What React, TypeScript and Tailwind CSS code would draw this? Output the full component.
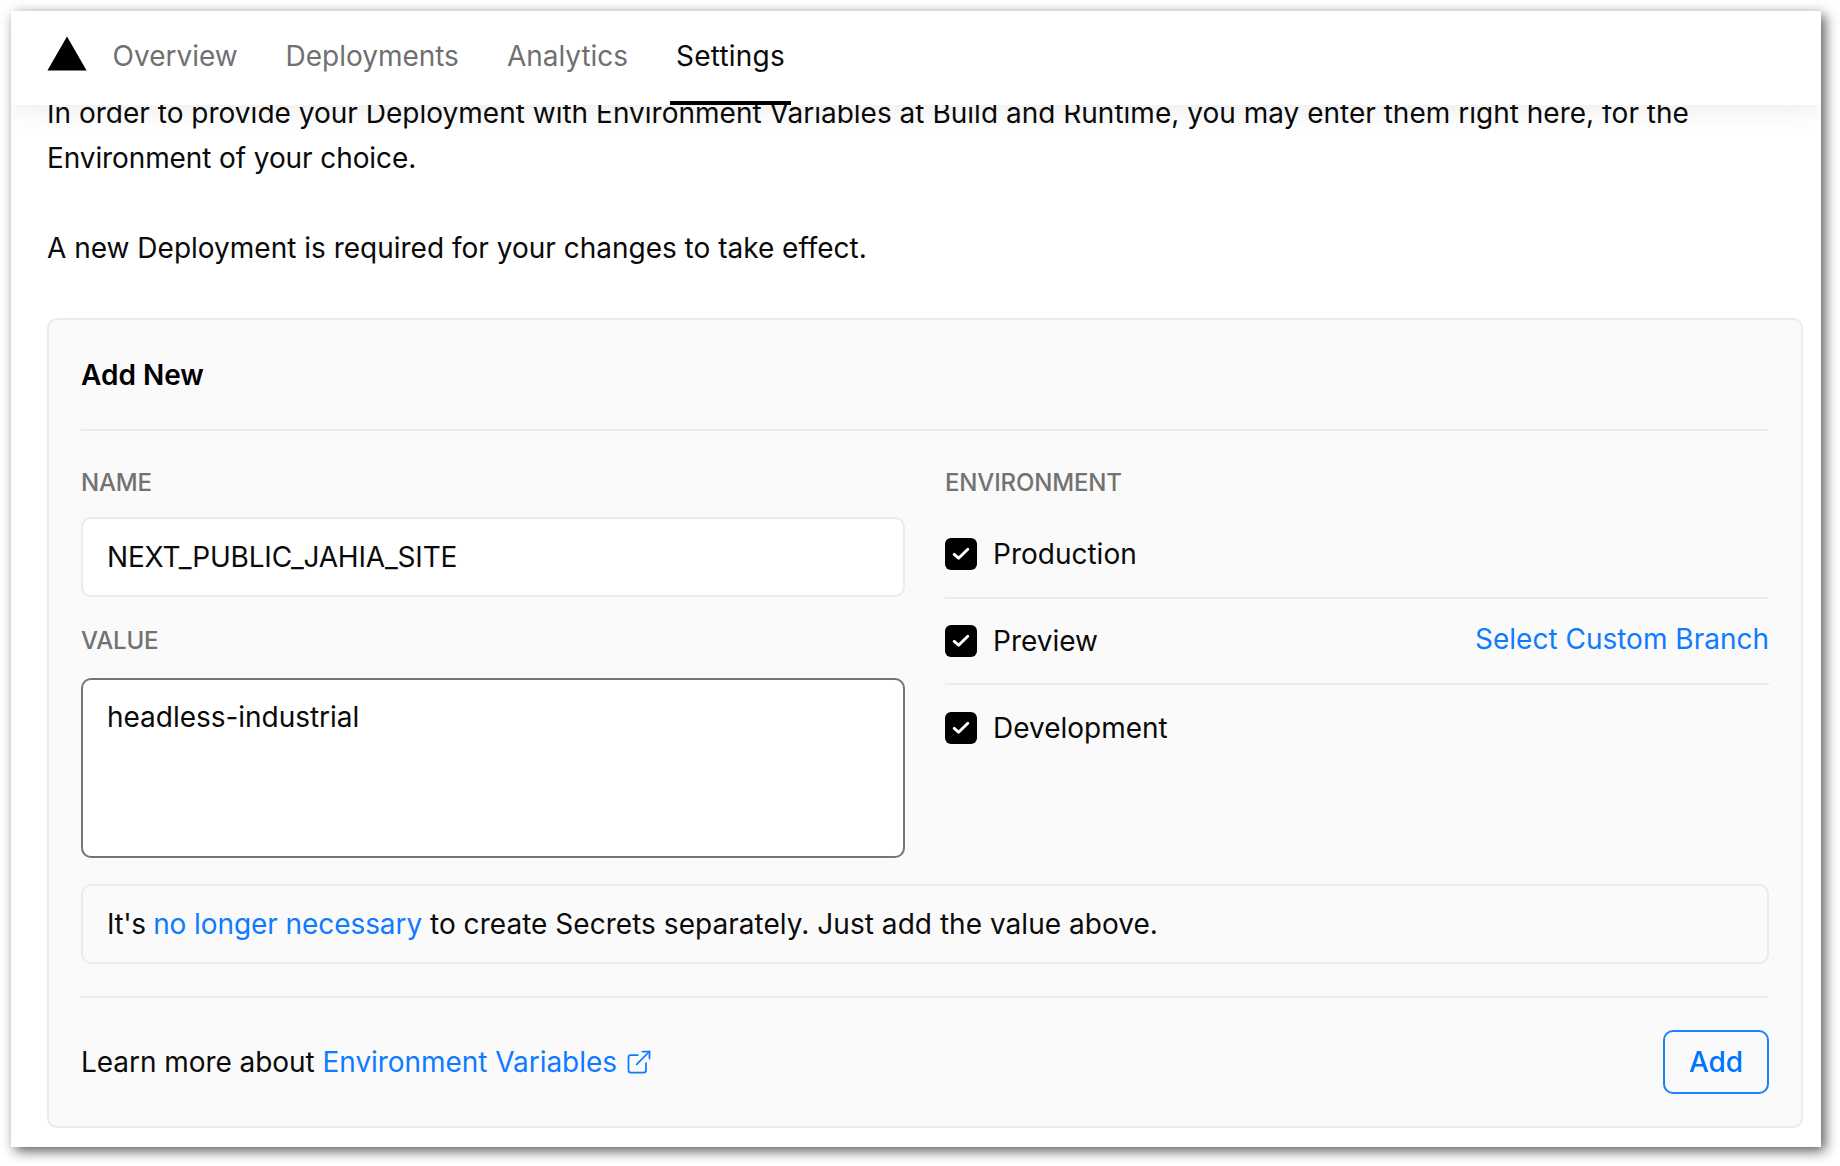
import React from "react";

const tabs = [
  { label: "Overview", active: false },
  { label: "Deployments", active: false },
  { label: "Analytics", active: false },
  { label: "Settings", active: true },
];

function Tab({ label, active }: { label: string; active: boolean }) {
  return (
    <a
      className={
        active
          ? "relative flex h-full items-center px-1.5 pb-1 tracking-[0.2px] text-[#0a0a0a]"
          : "relative flex h-full items-center px-1.5 pb-1 tracking-[-0.02px] text-[#707070]"
      }
    >
      {label}
      {active && <span className="absolute inset-x-0 bottom-0 h-1 bg-black" />}
    </a>
  );
}

function Check() {
  return (
    <span className="flex size-8 items-center justify-center rounded-[6px] bg-black">
      <svg viewBox="0 0 32 32" className="size-8" fill="none" stroke="white" strokeWidth="2.9" strokeLinecap="round" strokeLinejoin="round">
        <path d="M9.2 16.4L13.6 20.2L22.8 11.2" />
      </svg>
    </span>
  );
}

function Option({ label }: { label: string }) {
  return (
    <label className="flex h-8 items-center gap-4 leading-8">
      <Check />
      <span>{label}</span>
    </label>
  );
}

function FieldLabel({ children }: { children: React.ReactNode }) {
  return <div className="h-[38px] text-[24px] leading-[38px] font-medium tracking-[-0.16px] text-[#727272]">{children}</div>;
}

export default function App() {
  return (
    <div className="h-[1166px] w-[1840px] overflow-hidden bg-white pt-[11px] pl-[11px] font-['Inter',sans-serif] text-[28px] leading-[45px] text-[#0a0a0a]">
      <div className="h-[1136px] w-[1810px] overflow-hidden bg-white shadow-[4px_4px_12px_rgba(0,0,0,0.65)]">
        <header className="relative z-10 flex h-[94px] items-center bg-white pl-9 shadow-[0_0_30px_rgba(0,0,0,0.1)]">
          <svg viewBox="0 0 40 35" className="mt-[-9px] h-[35px] w-10" fill="black">
            <path d="M20 0.6L39.6 34.6H0.4Z" />
          </svg>
          <nav className="ml-[19.6px] flex h-full gap-9">
            {tabs.map((t) => (
              <Tab key={t.label} {...t} />
            ))}
          </nav>
        </header>

        <main className="-mt-[14px] px-9 pr-[18px]">
          <p className="w-[1700px]">
            <span className="tracking-[0.01px]">
              In order to provide your Deployment with Environment Variables at Build and Runtime, you may enter them right here, for the
            </span>
            <br />
            <span className="tracking-[-0.1px]">Environment of your choice.</span>
          </p>
          <p className="mt-[45px]">A new Deployment is required for your changes to take effect.</p>

          <section className="mt-[47px] h-[810px] rounded-[10px] border-2 border-[#ebebeb] bg-[#fafafa] px-8 pt-[33px]">
            <h2 className="h-[76px] font-semibold text-black">Add New</h2>
            <hr className="border-t-2 border-[#ebebeb]" />

            <div className="mt-[33px] grid grid-cols-2 gap-10">
              <div>
                <FieldLabel>NAME</FieldLabel>
                <div className="mt-[15px] flex h-20 items-center rounded-[10px] border-2 border-[#ebebeb] bg-white px-6 tracking-[-0.18px]">
                  NEXT_PUBLIC_JAHIA_SITE
                </div>
                <div className="mt-[25px]">
                  <FieldLabel>VALUE</FieldLabel>
                </div>
                <div className="mt-[18px] h-[180px] rounded-[10px] border-2 border-[#757575] bg-white px-6 pt-[15px] tracking-[-0.03px]">
                  headless-industrial
                </div>
              </div>

              <div>
                <FieldLabel>ENVIRONMENT</FieldLabel>
                <div className="mt-[36px]">
                  <Option label="Production" />
                </div>
                <hr className="mt-[27px] border-t-2 border-[#ebebeb]" />
                <div className="mt-[26px] flex h-8 justify-between">
                  <Option label="Preview" />
                  <a className="-mt-[2px] leading-8 text-[#0f7bff]">Select Custom Branch</a>
                </div>
                <hr className="mt-[26px] border-t-2 border-[#ebebeb]" />
                <div className="mt-[27px]">
                  <Option label="Development" />
                </div>
              </div>
            </div>

            <div className="mt-[26px] flex h-20 items-center rounded-[10px] border-2 border-[#ebebeb] px-6">
              <p className="tracking-[0.035px]">
                <span className="tracking-[-0.4px]">It's </span>
                <a className="tracking-[-0.08px] text-[#0f7bff]">no longer necessary</a> to create Secrets separately. Just add the value above.
              </p>
            </div>

            <hr className="mt-8 border-t-2 border-[#ebebeb]" />

            <div className="mt-8 flex h-16 items-center justify-between">
              <p className="flex items-center tracking-[-0.05px]">
                <span className="whitespace-pre">Learn more about </span>
                <a className="flex items-center gap-2 text-[#0f7bff]">
                  Environment Variables
                  <svg viewBox="0 0 24 24" className="size-7" fill="none" stroke="currentColor" strokeWidth="1.5" strokeLinecap="round" strokeLinejoin="round">
                    <path d="M18 13v6a2 2 0 01-2 2H5a2 2 0 01-2-2V8a2 2 0 012-2h6" />
                    <path d="M15 3h6v6" />
                    <path d="M10 14L21 3" />
                  </svg>
                </a>
              </p>
              <button className="h-16 w-[106px] rounded-[10px] border-2 border-[#1a80ff] font-medium text-[#0074ff]">Add</button>
            </div>
          </section>
        </main>
      </div>
    </div>
  );
}
